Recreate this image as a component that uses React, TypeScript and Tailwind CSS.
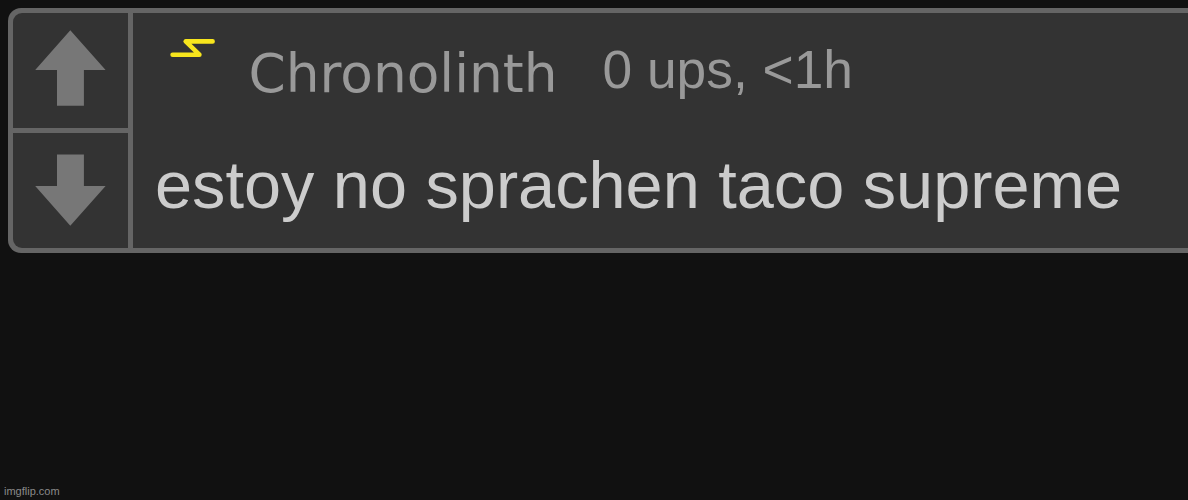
const UpArrow = () => (
  <svg viewBox="0 0 72 76" className="h-[76px] w-[72px] fill-[#777]">
    <path d="M36.3 .3 71.6 40H49.9V75.8H23V40H1.2Z" />
  </svg>
);

const DownArrow = () => (
  <svg viewBox="0 0 72 72" className="h-[72px] w-[72px] fill-[#777]">
    <path d="M36.3 71.8 71.6 32H49.9V.5H23V32H1.2Z" />
  </svg>
);

const Bolt = () => (
  <svg
    viewBox="0 0 46 20"
    fill="none"
    strokeWidth={4.6}
    strokeLinecap="round"
    strokeLinejoin="round"
    className="h-5 w-[46px] stroke-[#f7e51d]"
  >
    <path d="M3.6 16.7H30.4L16.7 3.4H43.6" />
  </svg>
);

const Votes = () => (
  <div className="flex w-[115px] flex-col gap-[5px]">
    <button
      type="button"
      aria-label="Upvote"
      className="flex h-[115px] justify-center rounded-tl-[9px] bg-[#333] pt-[17px] pr-px"
    >
      <UpArrow />
    </button>
    <button
      type="button"
      aria-label="Downvote"
      className="flex h-[115px] justify-center rounded-bl-[9px] bg-[#333] pt-[21px] pr-px"
    >
      <DownArrow />
    </button>
  </div>
);

const Comment = () => (
  <article className="flex h-[245px] gap-[5px] rounded-l-[13px] bg-[#656565] py-[5px] pl-[5px]">
    <Votes />
    <div className="flex-1 bg-[#333] pl-[22px] whitespace-nowrap">
      <header className="flex h-[132px] items-start text-[53.33px] leading-[80px] text-[#999]">
        <div className="pt-[25px] pl-[14px]">
          <Bolt />
        </div>
        <span className="ml-[33.5px] pt-[21px] font-['DejaVu_Sans',sans-serif]">Chronolinth</span>
        <span className="ml-[45px] pt-[17px]">0 ups, &lt;1h</span>
      </header>
      <p className="text-[66.67px] leading-[80px] text-[#ccc]">estoy no sprachen taco supreme</p>
    </div>
  </article>
);

export default function App() {
  return (
    <main className="flex h-[500px] flex-col justify-between overflow-hidden bg-[#111] pt-2 pl-2 font-['Liberation_Sans',sans-serif]">
      <Comment />
      <footer className="-ml-1 h-4 text-[11px] leading-[14px] text-[#8a8a8a]">imgflip.com</footer>
    </main>
  );
}
